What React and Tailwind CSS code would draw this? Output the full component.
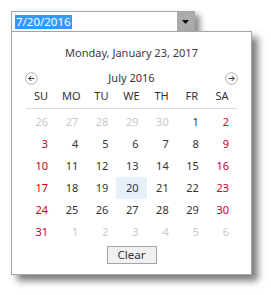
import React from "react";

const days = ["SU", "MO", "TU", "WE", "TH", "FR", "SA"];

// each cell: [label, kind]  kind: o = other month, w = weekend, n = normal, s = selected
const weeks = [
  [["26", "o"], ["27", "o"], ["28", "o"], ["29", "o"], ["30", "o"], ["1", "n"], ["2", "w"]],
  [["3", "w"], ["4", "n"], ["5", "n"], ["6", "n"], ["7", "n"], ["8", "n"], ["9", "w"]],
  [["10", "w"], ["11", "n"], ["12", "n"], ["13", "n"], ["14", "n"], ["15", "n"], ["16", "w"]],
  [["17", "w"], ["18", "n"], ["19", "n"], ["20", "s"], ["21", "n"], ["22", "n"], ["23", "w"]],
  [["24", "w"], ["25", "n"], ["26", "n"], ["27", "n"], ["28", "n"], ["29", "n"], ["30", "w"]],
  [["31", "w"], ["1", "o"], ["2", "o"], ["3", "o"], ["4", "o"], ["5", "o"], ["6", "o"]],
];

function NavArrow({ dir }) {
  return (
    <svg width="13" height="13" viewBox="0 0 13 13">
      <circle cx="6.5" cy="6.5" r="5.8" fill="white" stroke="#a8a8a8" strokeWidth="0.9" />
      {dir === "left" ? (
        <path d="M9.3 6.5H3.8M6.3 4L3.8 6.5L6.3 9" fill="none" stroke="#333" strokeWidth="1" />
      ) : (
        <path d="M3.7 6.5H9.2M6.7 4L9.2 6.5L6.7 9" fill="none" stroke="#333" strokeWidth="1" />
      )}
    </svg>
  );
}

export default function App() {
  return (
    <div className="w-[271px] h-[295px] bg-white pl-[11px] pt-[11px] font-['Noto_Sans',sans-serif] text-[11px] text-[#333]">
      {/* input */}
      <div className="flex w-[184px] h-[21px] border border-[#a5a5a5] bg-white shadow-[5px_4px_6px_rgba(0,0,0,0.45)] relative z-10">
        <div className="flex-1 flex items-center pl-[3px]">
          <span className="bg-[#3399ff] text-white leading-[14px] px-[1px] text-[11.5px]">7/20/2016</span>
        </div>
        <div className="w-[17px] bg-[#ababab] flex items-center justify-center">
          <svg width="7" height="4" viewBox="0 0 7 4">
            <path d="M0 0H7L3.5 4Z" fill="#111" />
          </svg>
        </div>
      </div>

      {/* popup */}
      <div className="-mt-px w-[241px] h-[244px] border border-[#a5a5a5] bg-white shadow-[6px_6px_7px_rgba(0,0,0,0.5)] relative z-20 flex flex-col">
        <div className="mt-[13px] h-[16px] leading-[16px] text-center text-[11px] text-[#3a3a4a]">
          Monday, January 23, 2017
        </div>
        <div className="mt-[9px] h-[16px] flex items-center justify-between px-[13px]">
          <NavArrow dir="left" />
          <span className="leading-[16px] text-[11px]">July 2016</span>
          <NavArrow dir="right" />
        </div>
        <div className="ml-[14px] w-[211px]">
          <div className="grid grid-cols-7 h-[18px] items-center border-b border-[#dcdcdc] pb-[3px] mt-[1px] box-content">
            {days.map((d) => (
              <div key={d} className="text-center leading-[16px]">
                {d}
              </div>
            ))}
          </div>
          <div className="grid grid-cols-7 mt-[2px]">
            {weeks.flat().map(([n, k], i) => (
              <div
                key={i}
                className={
                  "h-[22px] flex items-center justify-end pr-[8px] text-[11px] " +
                  (k === "o" ? "text-[#c8c8c8] " : k === "w" ? "text-[#cc0018] " : "text-[#333] ") +
                  (k === "s" ? "bg-[#e5f0fa]" : "")
                }
              >
                {n}
              </div>
            ))}
          </div>
        </div>
        <div className="flex justify-center mt-[3px]">
          <div className="w-[50px] h-[18px] border border-[#a5a5a5] bg-[#f0f0f0] flex items-center justify-center leading-[16px] text-[11.5px]">
            Clear
          </div>
        </div>
      </div>
    </div>
  );
}
